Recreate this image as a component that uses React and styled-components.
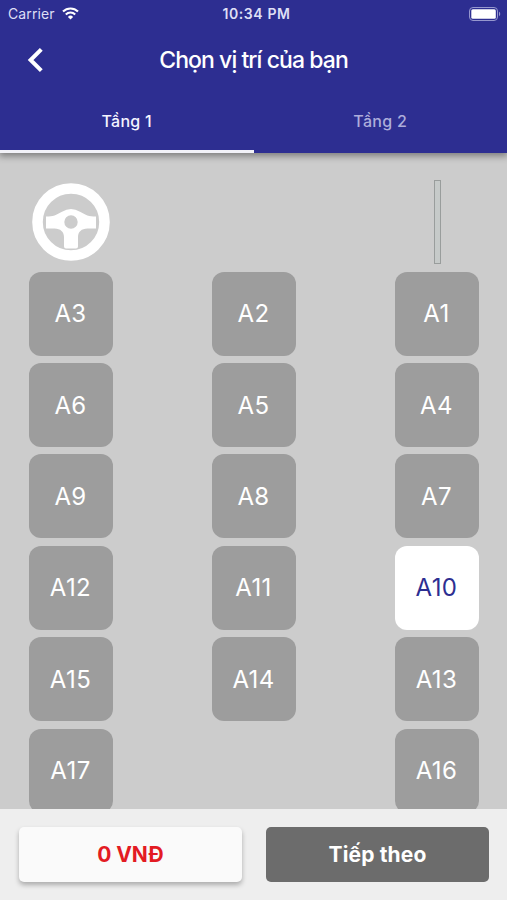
import React, { useState } from "react";
import styled, { createGlobalStyle } from "styled-components";

const GlobalStyle = createGlobalStyle`
  * {
    box-sizing: border-box;
  }

  body {
    margin: 0;
    font-family: Inter, Roboto, sans-serif;
  }

  button {
    border: 0;
    padding: 0;
    background: none;
    font: inherit;
  }
`;

const Screen = styled.div`
  display: flex;
  flex-direction: column;
  height: 100vh;
  overflow: hidden;
  background-color: #cccccc;
`;

const Header = styled.header`
  flex: none;
  z-index: 1;
  background-color: #2d2e91;
  color: #fff;
  box-shadow: 0 2px 7px 1px rgba(0, 0, 0, 0.4);
`;

const StatusBar = styled.div`
  display: grid;
  grid-template-columns: 1fr auto 1fr;
  align-items: center;
  height: 27px;
  padding: 0 6px 0 8px;
  color: #dedff5;
`;

const Carrier = styled.div`
  display: flex;
  align-items: center;
  gap: 7px;
  font-size: 14px;
  letter-spacing: 0.1px;
`;

const Clock = styled.div`
  padding-left: 4px;
  font-size: 14px;
  font-weight: 600;
  letter-spacing: 0.6px;
`;

const Battery = styled.svg`
  justify-self: end;
`;

const TitleBar = styled.div`
  display: grid;
  grid-template-columns: 72px 1fr 72px;
  align-items: center;
  height: 66px;
`;

const BackButton = styled.button`
  display: flex;
  padding-left: 27px;
  color: #fff;
`;

const Title = styled.h1`
  margin: 0;
  font-size: 23px;
  font-weight: 500;
  letter-spacing: -0.93px;
  text-align: center;
  white-space: nowrap;
`;

const Tabs = styled.div`
  display: grid;
  grid-template-columns: 1fr 1fr;
  height: 59.5px;
`;

const Tab = styled.button`
  border-bottom: 3px solid ${(props) => (props.$active ? "#f2f2f8" : "transparent")};
  color: ${(props) => (props.$active ? "#f4f4ff" : "#adaddb")};
  font-size: 16px;
  font-weight: 500;
  letter-spacing: 0.3px;
`;

const SeatMap = styled.main`
  flex: 1;
  min-height: 0;
  overflow: hidden;
  display: grid;
  grid-template-columns: repeat(3, 84px);
  grid-auto-rows: 84px;
  justify-content: space-between;
  align-content: start;
  row-gap: 7.4px;
  padding: 27.8px 28px 0 29px;
`;

const Fixture = styled.div`
  grid-column: ${(props) => props.$column};
  display: flex;
  align-items: center;
  justify-content: center;
`;

const Door = styled.div`
  width: 7px;
  height: 84px;
  border: 1px solid #999d9c;
  background-color: #c6cac9;
`;

const Seat = styled.button`
  grid-column: ${(props) => props.$column};
  padding-right: 1px;
  border-radius: 12px;
  background-color: ${(props) => (props.$selected ? "#fff" : "#9d9d9d")};
  color: ${(props) => (props.$selected ? "#2d2e91" : "#fff")};
  font-size: 24px;
  letter-spacing: 0.4px;
`;

const Footer = styled.footer`
  flex: none;
  display: grid;
  grid-template-columns: 1fr 1fr;
  gap: 24px;
  height: 91px;
  padding: 18px 18px 18px 19px;
  background-color: #eeeeee;
`;

const FooterButton = styled.button`
  height: 55px;
  border-radius: 5px;
  font-size: 21px;
  font-weight: 700;
`;

const PriceButton = styled(FooterButton)`
  background-color: #fafafa;
  color: #e31b23;
  letter-spacing: -0.1px;
  box-shadow: 0 3px 5px rgba(0, 0, 0, 0.28);
`;

const NextButton = styled(FooterButton)`
  background-color: #6c6c6c;
  color: #fff;
  letter-spacing: 0.15px;
`;

const WifiIcon = () => (
  <svg width="17" height="13" viewBox="0 0 17 13" fill="none" stroke="#fff" strokeWidth="2.1">
    <path d="M1 4.6a10.7 10.7 0 0 1 15 0" />
    <path d="M3.8 7.5a6.7 6.7 0 0 1 9.4 0" />
    <path d="M8.5 12.5 5.9 9.9a3.7 3.7 0 0 1 5.2 0Z" fill="#fff" stroke="none" />
  </svg>
);

const BatteryIcon = () => (
  <Battery width="32" height="14" viewBox="0 0 32 14">
    <rect x="0.5" y="0.5" width="28" height="13" rx="3.5" fill="none" stroke="#9697ce" />
    <rect x="2.3" y="2.3" width="24.5" height="9.4" rx="1.5" fill="#fff" />
    <path d="M30 4.8c1.6.6 1.6 3.8 0 4.4Z" fill="#9697ce" />
  </Battery>
);

const BackIcon = () => (
  <svg width="17" height="25" viewBox="0 0 17 25" fill="none" stroke="currentColor" strokeWidth="4">
    <path d="M14.3 1.4 3.600 12 14.300 22.600" />
  </svg>
);

const SteeringWheelIcon = () => (
  <svg width="78" height="78" viewBox="0 0 78 78">
    <circle cx="39" cy="39" r="33.5" fill="none" stroke="#fff" strokeWidth="10.6" />
    <path
      fill="#fff"
      fillRule="evenodd"
      d="M14 33.5h2.500c6.500-.2 9.500-2.700 13.500-4.700Q34.500 26 39 26t9 2.800c4 2 7 4.500 13.500 4.700H64v12h-8.500c-6 0-9.500 3.500-9.500 8.500v9.500q0 2-2 2H34q-2 0-2-2V54c0-5-3.500-8.500-9.500-8.500H14ZM39 32.300a6.700 6.700 0 1 0 0 13.400 6.700 6.700 0 1 0 0-13.400Z"
    />
  </svg>
);

const floors = ["Tầng 1", "Tầng 2"];

const rows = [
  ["A3", "A2", "A1"],
  ["A6", "A5", "A4"],
  ["A9", "A8", "A7"],
  ["A12", "A11", "A10"],
  ["A15", "A14", "A13"],
  ["A17", null, "A16"],
];

const App = () => {
  const [floor, setFloor] = useState(0);
  const [selected, setSelected] = useState("A10");

  return (
    <Screen>
      <GlobalStyle />
      <Header>
        <StatusBar>
          <Carrier>
            Carrier
            <WifiIcon />
          </Carrier>
          <Clock>10:34 PM</Clock>
          <BatteryIcon />
        </StatusBar>
        <TitleBar>
          <BackButton>
            <BackIcon />
          </BackButton>
          <Title>Chọn vị trí của bạn</Title>
        </TitleBar>
        <Tabs>
          {floors.map((name, index) => (
            <Tab key={name} $active={index === floor} onClick={() => setFloor(index)}>
              {name}
            </Tab>
          ))}
        </Tabs>
      </Header>
      <SeatMap>
        <Fixture $column={1}>
          <SteeringWheelIcon />
        </Fixture>
        <Fixture $column={3}>
          <Door />
        </Fixture>
        {rows.map((row) =>
          row.map(
            (seat, index) =>
              seat && (
                <Seat
                  key={seat}
                  $column={index + 1}
                  $selected={seat === selected}
                  onClick={() => setSelected(seat)}
                >
                  {seat}
                </Seat>
              )
          )
        )}
      </SeatMap>
      <Footer>
        <PriceButton>0 VNĐ</PriceButton>
        <NextButton>Tiếp theo</NextButton>
      </Footer>
    </Screen>
  );
};

export default App;
